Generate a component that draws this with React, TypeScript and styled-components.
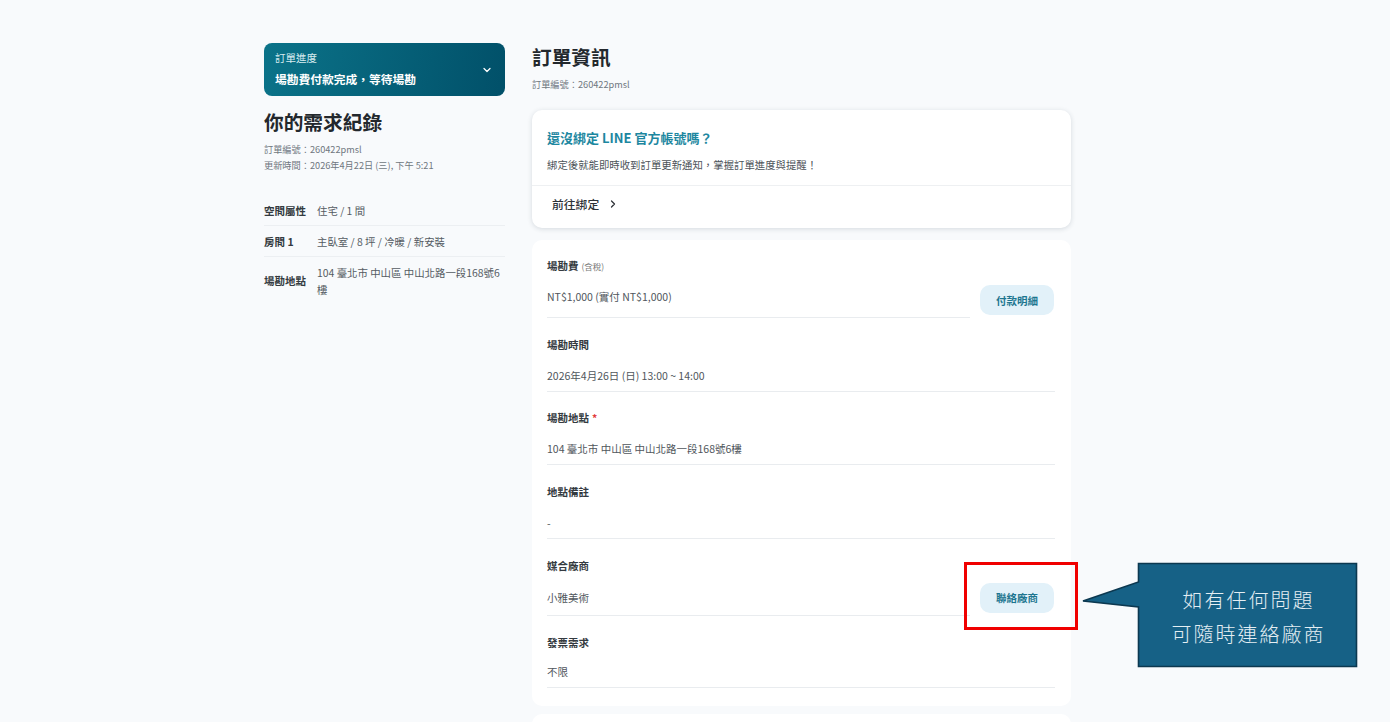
import React from "react";
import styled, { createGlobalStyle } from "styled-components";
import { ChevronDown, ChevronRight } from "lucide-react";

const Global = createGlobalStyle`
  html, body { margin: 0; padding: 0; height: 722px; overflow: hidden; background: #f8fafc; }
  * { box-sizing: border-box; }
  body { font-family: "Noto Sans CJK TC", "Noto Sans", sans-serif; color: #333; }
`;

const Page = styled.div`
  position: relative;
  display: flex;
  align-items: flex-start;
  gap: 27px;
  width: 1390px;
  height: 722px;
  padding: 43px 0 0 264px;
  overflow: hidden;
`;

const Sidebar = styled.aside`
  width: 241px;
  flex: none;
`;

const Banner = styled.div`
  height: 53px;
  border-radius: 8px;
  padding: 0 12px 0 11px;
  display: flex;
  align-items: center;
  justify-content: space-between;
  color: #fff;
  background: linear-gradient(100deg, #0b7389 0%, #015069 100%);
`;

const BannerLabel = styled.div`
  font-size: 10.5px;
  line-height: 15px;
  color: #d8ecf0;
`;

const BannerText = styled.div`
  font-size: 11.75px;
  line-height: 17px;
  margin: 5px 0 2px;
  font-weight: 700;
`;

const PageTitle = styled.h1<{ $top: number }>`
  margin: ${(p) => p.$top}px 0 0;
  font-size: 19.7px;
  line-height: 28px;
  font-weight: 700;
  color: #23282d;
`;

const Meta = styled.div`
  font-size: 9.2px;
  line-height: 16px;
  color: #6f7780;
`;

const MetaGroup = styled.div`
  margin-top: 5px;
`;

const SpecList = styled.div`
  margin-top: 22px;
`;

const SpecRow = styled.div`
  display: flex;
  align-items: center;
  padding: 7px 0 6px;
  border-bottom: 1px solid #eceff2;
  &:last-child { border-bottom: 0; }
`;

const SpecLabel = styled.div`
  width: 53px;
  flex: none;
  font-size: 10.5px;
  line-height: 16px;
  font-weight: 700;
  color: #343a40;
`;

const SpecValue = styled.div`
  flex: 1;
  font-size: 10.42px;
  line-height: 17px;
  color: #555c63;
`;

const Main = styled.main`
  width: 539px;
  flex: none;
`;

const MainHeader = styled.div`
  padding-bottom: 17px;
`;

const MainMeta = styled(Meta)`
  margin-top: 5px;
  margin-bottom: 1px;
`;

const Card = styled.section`
  background: #fff;
  border-radius: 10px;
  margin-bottom: 12px;
`;

const BindCard = styled(Card)`
  height: 118px;
  box-shadow: 0 1px 5px rgba(30, 50, 70, 0.16);
`;

const BindBody = styled.div`
  height: 76px;
  padding: 18px 16px 0 15px;
  border-bottom: 1px solid #eef0f2;
`;

const BindTitle = styled.div`
  font-size: 13px;
  line-height: 20px;
  font-weight: 700;
  color: #1d87a0;
`;

const BindText = styled.div`
  margin-top: 9px;
  font-size: 10.4px;
  line-height: 16px;
  color: #4d5359;
`;

const BindLink = styled.div`
  display: flex;
  align-items: center;
  gap: 8px;
  height: 37px;
  padding: 0 0 2px 20px;
  font-size: 11.8px;
  font-weight: 500;
  color: #2d3237;
`;

const DetailCard = styled(Card)`
  height: 466px;
  padding: 18px 16px 0 15px;
  margin-bottom: 8px;
`;

const FootCard = styled(Card)`
  height: 60px;
`;

const Field = styled.div<{ $after?: number }>`
  display: flex;
  align-items: flex-end;
  gap: 10px;
  margin-bottom: ${(p) => p.$after ?? 18.7}px;
`;

const FieldBody = styled.div`
  flex: 1;
  min-width: 0;
  border-bottom: 1px solid #e9ecef;
`;

const FieldLabel = styled.div`
  font-size: 10.5px;
  line-height: 16px;
  font-weight: 700;
  color: #343a40;
`;

const Required = styled.span`
  color: #e23b3b;
  margin-left: 3px;
`;

const Hint = styled.span`
  font-size: 8.5px;
  font-weight: 400;
  color: #777;
  margin-left: 3px;
`;

const FieldValue = styled.div<{ $gap?: number; $bottom?: number }>`
  margin-top: ${(p) => p.$gap ?? 15}px;
  padding-bottom: ${(p) => p.$bottom ?? 7}px;
  font-size: 10.5px;
  line-height: 16px;
  color: #50565c;
`;

const ActionButton = styled.button`
  flex: none;
  width: 74px;
  height: 30px;
  margin: 0 1px 3px 0;
  border: 0;
  padding: 0;
  border-radius: 10px;
  background: #e2f1f9;
  color: #1d7690;
  font-family: inherit;
  font-size: 10.5px;
  font-weight: 700;
`;

const Highlight = styled.div`
  position: absolute;
  left: 964px;
  top: 562px;
  width: 114px;
  height: 68px;
  border: 3px solid #f00000;
  pointer-events: none;
`;

const Callout = styled.div`
  position: absolute;
  left: 1082px;
  top: 562px;
  width: 276px;
  height: 106px;
`;

const CalloutShape = styled.svg`
  display: block;
`;

const CalloutText = styled.div`
  position: absolute;
  left: 57px;
  top: 3px;
  width: 219px;
  height: 104px;
  display: flex;
  flex-direction: column;
  align-items: center;
  justify-content: center;
  font-size: 20px;
  line-height: 34px;
  letter-spacing: 2px;
  font-weight: 300;
  color: #e4eef3;
`;

const specs = [
  ["空間屬性", "住宅 / 1 間"],
  ["房間 1", "主臥室 / 8 坪 / 冷暖 / 新安裝"],
  ["場勘地點", "104 臺北市 中山區 中山北路一段168號6樓"],
];

export default function App() {
  return (
    <Page>
      <Global />
      <Sidebar>
        <Banner>
          <div>
            <BannerLabel>訂單進度</BannerLabel>
            <BannerText>場勘費付款完成，等待場勘</BannerText>
          </div>
          <ChevronDown size={12} strokeWidth={2.5} />
        </Banner>
        <PageTitle $top={12}>你的需求紀錄</PageTitle>
        <MetaGroup>
          <Meta>訂單編號：260422pmsl</Meta>
          <Meta>更新時間：2026年4月22日 (三), 下午 5:21</Meta>
        </MetaGroup>
        <SpecList>
          {specs.map(([label, value]) => (
            <SpecRow key={label}>
              <SpecLabel>{label}</SpecLabel>
              <SpecValue>{value}</SpecValue>
            </SpecRow>
          ))}
        </SpecList>
      </Sidebar>
      <Main>
        <MainHeader>
          <PageTitle $top={0}>訂單資訊</PageTitle>
          <MainMeta>訂單編號：260422pmsl</MainMeta>
        </MainHeader>
        <BindCard>
          <BindBody>
            <BindTitle>還沒綁定 LINE 官方帳號嗎？</BindTitle>
            <BindText>綁定後就能即時收到訂單更新通知，掌握訂單進度與提醒！</BindText>
          </BindBody>
          <BindLink>
            前往綁定
            <ChevronRight size={12} strokeWidth={2.5} />
          </BindLink>
        </BindCard>
        <DetailCard>
          <Field>
            <FieldBody>
              <FieldLabel>場勘費<Hint>(含稅)</Hint></FieldLabel>
              <FieldValue $bottom={12}>NT$1,000 (實付 NT$1,000)</FieldValue>
            </FieldBody>
            <ActionButton>付款明細</ActionButton>
          </Field>
          <Field>
            <FieldBody>
              <FieldLabel>場勘時間</FieldLabel>
              <FieldValue>2026年4月26日 (日) 13:00 ~ 14:00</FieldValue>
            </FieldBody>
          </Field>
          <Field>
            <FieldBody>
              <FieldLabel>場勘地點<Required>*</Required></FieldLabel>
              <FieldValue>104 臺北市 中山區 中山北路一段168號6樓</FieldValue>
            </FieldBody>
          </Field>
          <Field>
            <FieldBody>
              <FieldLabel>地點備註</FieldLabel>
              <FieldValue>-</FieldValue>
            </FieldBody>
          </Field>
          <Field $after={19.7}>
            <FieldBody>
              <FieldLabel>媒合廠商</FieldLabel>
              <FieldValue $gap={16} $bottom={9}>小雅美術</FieldValue>
            </FieldBody>
            <ActionButton>聯絡廠商</ActionButton>
          </Field>
          <Field>
            <FieldBody>
              <FieldLabel>發票需求</FieldLabel>
              <FieldValue $gap={13}>不限</FieldValue>
            </FieldBody>
          </Field>
        </DetailCard>
        <FootCard />
      </Main>
      <Highlight />
      <Callout>
        <CalloutShape width="276" height="106" viewBox="0 0 276 106">
          <polygon
            points="56.5,1.5 274.5,1.5 274.5,104.5 56.5,104.5 56.5,45 1,39 56.5,20"
            fill="#166186"
            stroke="#0c3850"
            strokeWidth="1.6"
          />
        </CalloutShape>
        <CalloutText>
          <div>如有任何問題</div>
          <div>可隨時連絡廠商</div>
        </CalloutText>
      </Callout>
    </Page>
  );
}
